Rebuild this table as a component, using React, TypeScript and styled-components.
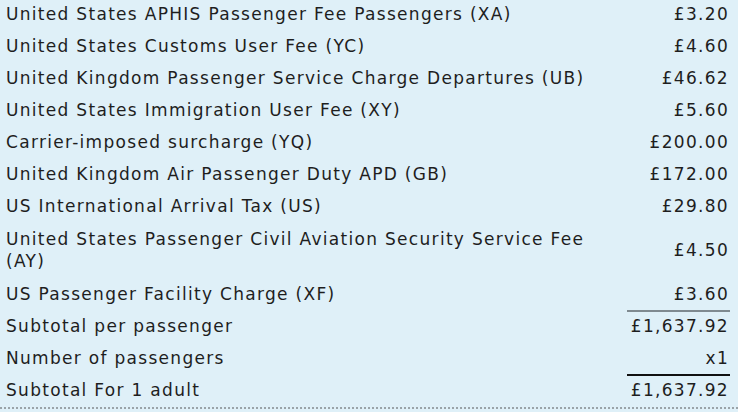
import styled, { createGlobalStyle } from "styled-components";

const Global = createGlobalStyle`
    html, body {
        margin: 0;
        padding: 0;
        background: #dff0f8;
    }
`;

const Panel = styled.div`
    width: 738px;
    height: 412px;
    overflow: hidden;
    background: #dff0f8;
    font-family: "DejaVu Sans", Verdana, sans-serif;
    font-size: 17px;
    letter-spacing: 1.3px;
    color: #1e1e1e;
`;

const Table = styled.div`
    margin-top: -2px;
    padding: 0 8px 0 6px;
    border-bottom: 2px dotted #9aa3a8;
`;

const Row = styled.div<{ $last?: boolean }>`
    display: grid;
    grid-template-columns: 1fr 103px;
    column-gap: 18px;
    align-items: center;
    padding-bottom: ${(p) => (p.$last ? "1px" : "0")};
`;

const Label = styled.div<{ $wrapped?: boolean }>`
    padding: ${(p) => (p.$wrapped ? "6px 0" : "5px 0")};
    line-height: 22px;
`;

const Amount = styled.div<{ $rule?: "grey" | "black" }>`
    align-self: stretch;
    display: flex;
    align-items: center;
    justify-content: flex-end;
    padding-right: 1px;
    line-height: 22px;
    padding-top: ${(p) => (p.$rule ? "3px" : "5px")};
    padding-bottom: 5px;
    border-top: ${(p) =>
        p.$rule === "grey"
            ? "2px solid #7f8a90"
            : p.$rule === "black"
              ? "2px solid #111"
              : "none"};
`;

type Line = { label: string; amount: string; rule?: "grey" | "black"; wrapped?: boolean };

const lines: Line[] = [
    { label: "United States APHIS Passenger Fee Passengers (XA)", amount: "£3.20" },
    { label: "United States Customs User Fee (YC)", amount: "£4.60" },
    { label: "United Kingdom Passenger Service Charge Departures (UB)", amount: "£46.62" },
    { label: "United States Immigration User Fee (XY)", amount: "£5.60" },
    { label: "Carrier-imposed surcharge (YQ)", amount: "£200.00" },
    { label: "United Kingdom Air Passenger Duty APD (GB)", amount: "£172.00" },
    { label: "US International Arrival Tax (US)", amount: "£29.80" },
    {
        label: "United States Passenger Civil Aviation Security Service Fee (AY)",
        amount: "£4.50",
        wrapped: true,
    },
    { label: "US Passenger Facility Charge (XF)", amount: "£3.60" },
    { label: "Subtotal per passenger", amount: "£1,637.92", rule: "grey" },
    { label: "Number of passengers", amount: "x1" },
    { label: "Subtotal For 1 adult", amount: "£1,637.92", rule: "black" },
];

export default function App() {
    return (
        <Panel>
            <Global />
            <Table>
                {lines.map((l, i) => (
                    <Row key={l.label} $last={i === lines.length - 1}>
                        <Label $wrapped={l.wrapped}>{l.label}</Label>
                        <Amount $rule={l.rule}>{l.amount}</Amount>
                    </Row>
                ))}
            </Table>
        </Panel>
    );
}
